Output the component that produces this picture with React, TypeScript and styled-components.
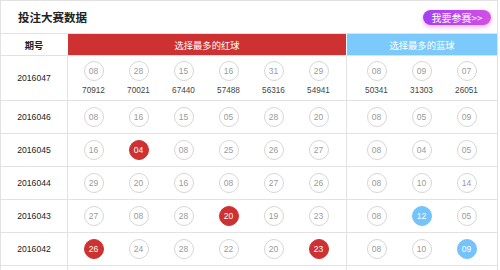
import * as React from "react";
import styled, { createGlobalStyle } from "styled-components";

const GlobalStyle = createGlobalStyle`
  html, body {
    margin: 0;
    padding: 0;
    background: #fff;
  }
  body {
    font-family: "Liberation Sans", "Noto Sans CJK SC", sans-serif;
  }
`;

const CJK = `"Noto Sans CJK SC", "Liberation Sans", sans-serif`;
const LINE = "#e2e2e2";
const RED = "#cd3131";
const BLUE = "#7cc9fc";

const Panel = styled.section`
  width: 498px;
  box-sizing: border-box;
  border: 1px solid ${LINE};
  border-bottom: none;
`;

const TitleBar = styled.header`
  height: 32px;
  display: flex;
  align-items: center;
  justify-content: space-between;
  padding: 0 6px 0 17px;
  border-bottom: 1px solid ${LINE};
`;

const Title = styled.h2`
  margin: 0;
  font-family: ${CJK};
  font-size: 11.5px;
  font-weight: 700;
  color: #222;
`;

const JoinButton = styled.a`
  display: flex;
  align-items: center;
  justify-content: center;
  width: 68px;
  height: 15px;
  margin-top: 1px;
  border-radius: 8px;
  background: linear-gradient(90deg, #a43ff3, #d44fe6);
  box-shadow: 0 2px 4px rgba(214, 80, 226, 0.45);
  color: #fff;
  font-family: ${CJK};
  font-size: 10px;
  text-decoration: none;
  cursor: pointer;
`;

const Row = styled.div<{ $height: number }>`
  display: grid;
  grid-template-columns: 66px 278px 150px;
  column-gap: 1px;
  background: ${LINE};
  border-bottom: 1px solid ${LINE};
  height: ${(p) => p.$height}px;
`;

const HeadRow = styled(Row)`
  background: #fff;
`;

// empty tail so the column rules run on past the last draw, as in the page
const Tail = styled(Row)`
  border-bottom: none;
`;

const Cell = styled.div`
  background: #fff;
  display: flex;
  align-items: center;
  justify-content: center;
`;

const PeriodHead = styled(Cell)`
  font-family: ${CJK};
  font-size: 9.3px;
  font-weight: 700;
  color: #222;
`;

const GroupHead = styled(Cell)<{ $color: string }>`
  background: ${(p) => p.$color};
  color: #fff;
  font-family: ${CJK};
  font-size: 9.3px;
`;

const Period = styled(Cell)`
  font-size: 8.6px;
  color: #222;
`;

const BallGroup = styled(Cell)<{ $pad: number }>`
  justify-content: flex-start;
  padding-left: ${(p) => p.$pad}px;
`;

const Slot = styled.div`
  width: 45px;
  display: flex;
  flex-direction: column;
  align-items: center;
`;

const Ball = styled.span<{ $fill?: string }>`
  width: 20px;
  height: 20px;
  box-sizing: border-box;
  border-radius: 50%;
  display: flex;
  align-items: center;
  justify-content: center;
  font-size: 8.5px;
  color: ${(p) => (p.$fill ? "#fff" : "#9a9a9a")};
  background: ${(p) => p.$fill || "#fff"};
  border: 1px solid ${(p) => p.$fill || "#d6d6d6"};
`;

const Count = styled.span`
  margin-top: 5px;
  font-size: 8.2px;
  line-height: 9px;
  color: #444;
`;

type Pick = { n: string; hit?: boolean; count?: string };
type Draw = { period: string; red: Pick[]; blue: Pick[] };

const p = (list: string, hits: number[] = [], counts?: string[]): Pick[] =>
  list.split(" ").map((n, i) => ({ n, hit: hits.includes(i), count: counts?.[i] }));

const draws: Draw[] = [
  {
    period: "2016047",
    red: p("08 28 15 16 31 29", [], ["70912", "70021", "67440", "57488", "56316", "54941"]),
    blue: p("08 09 07", [], ["50341", "31303", "26051"]),
  },
  { period: "2016046", red: p("08 16 15 05 28 20"), blue: p("08 05 09") },
  { period: "2016045", red: p("16 04 08 25 26 27", [1]), blue: p("08 04 05") },
  { period: "2016044", red: p("29 20 16 08 27 26"), blue: p("08 10 14") },
  { period: "2016043", red: p("27 08 28 20 19 23", [3]), blue: p("08 12 05", [1]) },
  { period: "2016042", red: p("26 24 28 22 20 23", [0, 5]), blue: p("08 10 09", [2]) },
];

const Balls = ({ picks, color }: { picks: Pick[]; color: string }) => (
  <>
    {picks.map((b, i) => (
      <Slot key={i}>
        <Ball $fill={b.hit ? color : undefined}>{b.n}</Ball>
        {b.count && <Count>{b.count}</Count>}
      </Slot>
    ))}
  </>
);

export default function App() {
  return (
    <>
      <GlobalStyle />
      <Panel>
        <TitleBar>
          <Title>投注大赛数据</Title>
          <JoinButton>我要参赛&gt;&gt;</JoinButton>
        </TitleBar>
        <HeadRow $height={21}>
          <PeriodHead>期号</PeriodHead>
          <GroupHead $color={RED}>选择最多的红球</GroupHead>
          <GroupHead $color={BLUE}>选择最多的蓝球</GroupHead>
        </HeadRow>
        {draws.map((d, i) => (
          <Row key={d.period} $height={i === 0 ? 44 : 32}>
            <Period>{d.period}</Period>
            <BallGroup $pad={3}>
              <Balls picks={d.red} color={RED} />
            </BallGroup>
            <BallGroup $pad={7}>
              <Balls picks={d.blue} color="#74c3fa" />
            </BallGroup>
          </Row>
        ))}
        <Tail $height={5}>
          <Cell />
          <Cell />
          <Cell />
        </Tail>
      </Panel>
    </>
  );
}
